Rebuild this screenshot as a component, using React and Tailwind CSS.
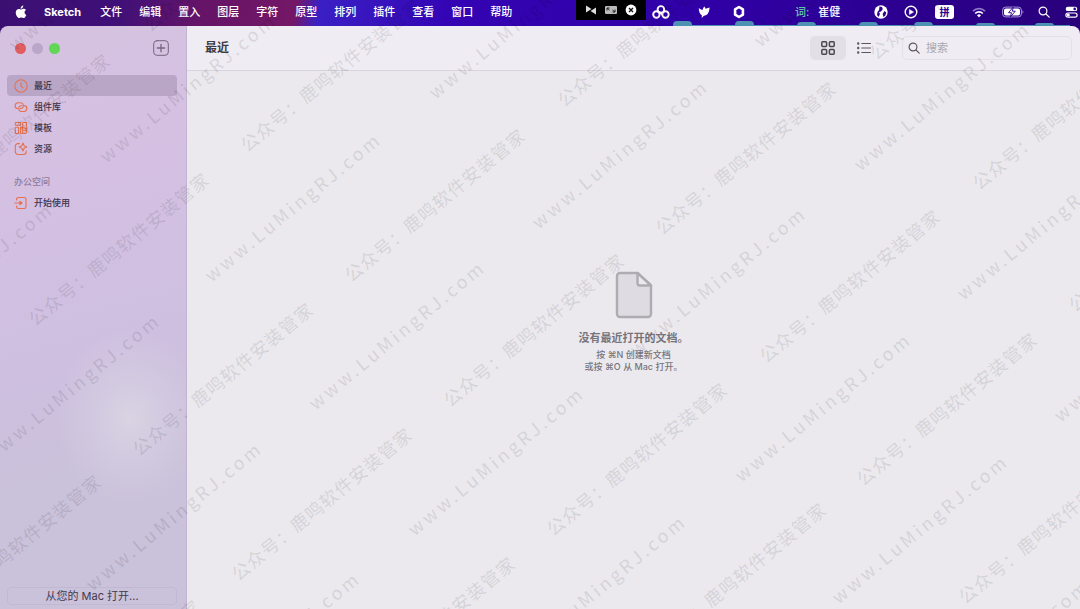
import React, { useState } from 'react';

const menus = ['文件', '编辑', '置入', '图层', '字符', '原型', '排列', '插件', '查看', '窗口', '帮助'];

// Centre of the first glyph of every watermark line
const urlMarks = [
  [17, 43], [108, 155], [213, 274], [317, 402], [416, 528], [518, 656],
  [-115, 344], [-8, 455], [94, 583], [192, 713],
  [437, 91], [540, 221], [638, 348], [743, 474], [840, 596], [921, 721],
  [762, 39], [862, 163], [965, 292], [1062, 414],
];

const nameMarks = [
  [-62, 196], [37, 315], [141, 445], [240, 570], [343, 699],
  [-71, 617], [28, 742],
  [152, 21], [249, 141], [353, 271], [452, 396], [555, 525], [654, 645],
  [566, 96], [664, 224], [768, 352], [865, 475], [967, 593],
  [878, 49], [981, 179], [1077, 301],
];

const AppleIcon = () => (
  <svg viewBox="0 0 24 28" className="h-[14px] w-3" fill="#fff">
    <path d="M16.500 1c.2 2-.6 3.500-1.500 4.600-1 1.100-2.300 1.900-3.700 1.800-.2-1.800.6-3.400 1.500-4.400C13.800 1.900 15.300 1.100 16.500 1zM22 9.800c-2 1.200-3 2.800-3 4.900 0 2.500 1.500 4.300 3.600 5.100-.9 2.700-3.100 6.400-5.500 6.400-1.700 0-2.300-1-4.400-1s-2.800 1-4.400 1C5.300 26.200 1.500 20.700 1.500 15.200 1.500 10.300 4.600 7.800 7.800 7.800c1.900 0 3.400 1.200 4.600 1.200 1.200 0 2.900-1.300 5.100-1.300 1.900 0 3.500.8 4.500 2.100z" />
  </svg>
);

const ClockIcon = () => (
  <svg viewBox="0 0 14 14" className="size-[14px]" fill="none" stroke="currentColor" strokeWidth="1.100" strokeLinecap="round">
    <circle cx="7" cy="7" r="6.200" />
    <path d="M7 3.500V7l1.800 1.800" />
  </svg>
);

const LinkIcon = () => (
  <svg viewBox="0 0 14 14" className="size-[14px]" fill="none" stroke="currentColor" strokeWidth="1.100" strokeLinecap="round">
    <path d="M3.400 8.600A3 3 0 0 1 3.800 2.700h2.700a3 3 0 0 1 2.400 4.700c-.6.900-1.700 1.200-2.600 1" />
    <path d="M10.600 5.600a3 3 0 0 1-.4 5.900H7.700a3 3 0 0 1-2.500-4.700c.6-.9 1.700-1.200 2.600-1" />
  </svg>
);

const TemplateIcon = () => (
  <svg viewBox="0 0 14 14" className="size-[14px]" fill="none" stroke="currentColor" strokeWidth="1.100" strokeLinejoin="round">
    <rect x="1.300" y="1.500" width="5.400" height="2.700" rx=".5" />
    <rect x="1.300" y="6.300" width="3.200" height="6.200" rx=".5" />
    <path d="M8.700 1.500h3.900v7.200L10.800 7H8.700z" />
    <path d="M6.500 6.300h2v6.200h-2z" />
    <path d="M8.500 9.300h4.100v1.200a2 2 0 0 1-2 2H8.500z" />
  </svg>
);

const AssetIcon = () => (
  <svg viewBox="0 0 14 14" className="size-[14px]" fill="none" stroke="currentColor" strokeWidth="1.100" strokeLinejoin="round" strokeLinecap="round">
    <path d="M5.500 1.600H4A2.700 2.700 0 0 0 1.300 4.300v5.500A2.700 2.700 0 0 0 4 12.500h5.500a2.700 2.700 0 0 0 2.700-2.700V9" />
    <path d="M9 1l1.100 2.700L12.800 5l-2.700 1.200L9 9 7.800 6.200 5.200 5l2.600-1.300z" />
  </svg>
);

const EnterIcon = () => (
  <svg viewBox="0 0 14 14" className="size-[14px]" fill="none" stroke="currentColor" strokeWidth="1.100" strokeLinejoin="round" strokeLinecap="round">
    <path d="M2.600 4V3.200a1.700 1.700 0 0 1 1.700-1.700h6a1.700 1.700 0 0 1 1.700 1.700v7.600a1.700 1.700 0 0 1-1.700 1.700h-6a1.700 1.700 0 0 1-1.700-1.700V10" />
    <path d="M.8 7h6.500" />
    <path d="M6 5.300 8 7 6 8.700z" fill="currentColor" />
  </svg>
);

const SearchIcon = ({ className }) => (
  <svg viewBox="0 0 12 12" className={className} fill="none" stroke="currentColor" strokeWidth="1.200" strokeLinecap="round">
    <circle cx="5" cy="5" r="3.900" />
    <path d="m8 8 3.200 3.200" />
  </svg>
);

const StatusIcons = () => (
  <>
    <svg viewBox="0 0 18 14" className="ml-[6px] h-[14px] w-[18px]" fill="none" stroke="#fff" strokeWidth="1.900">
      <circle cx="8.900" cy="4.400" r="3.300" />
      <circle cx="4.400" cy="9.500" r="3.200" />
      <circle cx="13.500" cy="9.500" r="3.200" />
      <path d="M6.500 7.300c2 0 3.200 1 4.200 2.500" />
    </svg>
    <svg viewBox="0 0 12 14" className="ml-7 h-[14px] w-3" fill="#fff">
      <path d="M.8 3C2 4.200 3.400 4.700 4.600 5 4.900 3.300 5.800 2.200 6.500 1.500L7.600 3.800 11.600 2.400C11.200 7.500 9.500 10.400 5.900 10.700L3.700 13l.2-2.700C1.800 9.200.8 6.500.8 3z" />
    </svg>
    <svg viewBox="0 0 12 14" className="ml-[23px] h-[14px] w-3" fill="none" stroke="#fff" strokeWidth="2.600" strokeLinejoin="round">
      <path d="M6 2 9.900 4.300v5.400L6 12 2.100 9.700V4.300z" />
    </svg>
    <p className="ml-[50px] w-[74px] text-[11px] whitespace-nowrap">
      <span className="mr-[6px] text-[#62c9a8]">词:</span> <span>崔健</span>
    </p>
    <svg viewBox="0 0 14 14" className="ml-[5px] size-[14px]">
      <circle cx="7" cy="7" r="6.700" fill="#fff" />
      <path d="M5.500 1.500 8 2l.8 2.200L7 6.500 5 7l1 2-1.500 3L3 10l.5-3L5 5zM10.500 6l1.800 1.500-1 3L9.500 12 8.600 9z" fill="#2d0090" />
    </svg>
    <svg viewBox="0 0 14 14" className="ml-4 size-[14px]" fill="none" stroke="#fff" strokeWidth="1.400">
      <circle cx="7" cy="7" r="5.800" />
      <path d="M5.400 4.500v5L9.600 7z" fill="#fff" strokeWidth=".5" />
    </svg>
    <span className="ml-[17px] flex h-[14px] w-[19px] items-center justify-center rounded-[3px] bg-white text-[10px] font-bold text-[#2d0090]">拼</span>
    <svg viewBox="0 0 16 12" className="ml-[17px] h-3 w-4" fill="none" strokeWidth="1.700">
      <path d="M2 5.200a8.500 8.500 0 0 1 12 0" stroke="#8f78c8" />
      <path d="M4.200 7.500a5.300 5.300 0 0 1 7.600 0" stroke="#fff" />
      <path d="m6 9.200 2 2.300 2-2.300a2.800 2.800 0 0 0-4 0z" fill="#fff" />
    </svg>
    <svg viewBox="0 0 22 12" className="ml-[15px] h-3 w-[22px]">
      <rect x=".6" y="1.100" width="18.800" height="9.800" rx="3" fill="none" stroke="#a796d8" />
      <rect x="2" y="2.500" width="16" height="7" rx="1.800" fill="#fff" />
      <path d="M20.500 4.200v3.600c1.200-.6 1.200-3 0-3.600z" fill="#a796d8" />
      <path d="M11.300 1 6.500 6.700h3L8.300 11l5-5.800h-3z" fill="#fff" stroke="#2d0090" strokeWidth=".9" />
    </svg>
    <SearchIcon className="ml-[14px] size-3" />
    <svg viewBox="0 0 13 12" className="ml-[15px] h-3 w-[13px]">
      <rect x=".7" y=".7" width="11.600" height="4.400" rx="2.200" fill="#fff" />
      <circle cx="9.700" cy="2.900" r="1.300" fill="#2d0090" />
      <rect x=".9" y="7" width="11.200" height="4.200" rx="2.100" fill="none" stroke="#fff" strokeWidth="1.200" />
      <circle cx="3.300" cy="9.100" r="1.500" fill="#fff" />
    </svg>
  </>
);

const MenuBar = () => (
  <header className="relative flex h-[26px] shrink-0 items-center pb-[2px] pl-[15px] pr-[2px] text-[11px] font-medium text-white">
    {/* Wallpaper showing above the window edge */}
    <div className="absolute right-[10px] bottom-0 flex items-end">
      <span className="h-[5px] w-[19px] rounded-t bg-[#4d91b3]" />
      <span className="h-px w-[43px] bg-[#4d91b3]" />
      <span className="h-[5px] w-[19px] rounded-t bg-[#4d91b3]" />
      <span className="h-px w-[43px] bg-[#4d91b3]" />
      <span className="h-1 w-[19px] rounded-t bg-[#4d91b3]" />
      <span className="h-px w-[43px] bg-[#4d91b3]" />
      <span className="h-1 w-[19px] rounded-t bg-[#4d91b3]" />
      <span className="h-px w-[36px] bg-[#4d91b3]" />
      <span className="h-1 w-[19px] rounded-t bg-[#4d91b3]" />
      <span className="h-px w-[43px] bg-[#4d91b3]" />
      <span className="h-[3px] w-[19px] rounded-t bg-[#4d91b3]" />
      <span className="h-px w-[40px] bg-[#4d91b3]" />
      <span className="h-[3px] w-[19px] rounded-t bg-[#4d91b3]" />
      <span className="h-px w-[16px] bg-[#4d91b3]" />
    </div>
    <AppleIcon />
    <nav className="relative ml-[17px] flex gap-[17px] whitespace-nowrap">
      <button className="mr-[2px] font-bold">Sketch</button>
      {menus.map((menu) => (
        <button key={menu}>{menu}</button>
      ))}
    </nav>
    <div className="relative ml-auto flex items-center">
      <div className="mb-1 flex h-5 w-[70px] items-center justify-center gap-2 self-start bg-black">
        <svg viewBox="0 0 12 12" className="size-3" fill="#ddd">
          <path d="M1 1.500v7L6.500 5zM11 3.500v7L5.500 7z" />
        </svg>
        <svg viewBox="0 0 12 12" className="size-3">
          <rect y="2" width="12" height="8" rx="1" fill="#bbb" />
          <path d="M2 6.500V4h2.500M2 4l2.500 2M10 5.500V8H7.500M10 8 7.500 6" stroke="#222" fill="none" />
        </svg>
        <svg viewBox="0 0 12 12" className="size-3">
          <circle cx="6" cy="6" r="5.400" fill="#fff" />
          <path d="m4 4 4 4M8 4 4 8" stroke="#111" strokeWidth="1.400" />
        </svg>
      </div>
      <StatusIcons />
    </div>
  </header>
);

const places = [
  { name: '最近', icon: ClockIcon },
  { name: '组件库', icon: LinkIcon },
  { name: '模板', icon: TemplateIcon },
  { name: '资源', icon: AssetIcon },
];

const SidebarItem = ({ name, icon: Icon, active, onClick }) => (
  <li>
    <button
      onClick={onClick}
      className={`flex h-[21px] w-full items-center gap-[6px] rounded pl-[7px] text-[9px] font-medium text-[#3f3348] ${active ? 'bg-[#b9a6c7]' : ''}`}
    >
      <span className="text-[#e5714f]"><Icon /></span>
      {name}
    </button>
  </li>
);

const Sidebar = ({ selected, onSelect }) => (
  <aside className="flex w-[187px] shrink-0 flex-col border-r border-[#c3b5d2] bg-[radial-gradient(ellipse_75px_90px_at_130px_392px,#d9d3e2_0%,#d6cfe2b0_40%,#d0c4e200_100%),linear-gradient(165deg,#d5c2e0_0%,#d5c0e2_25%,#cebfe0_55%,#cac1da_75%,#cac1da_100%)] pr-[9px] pb-1 pl-[7px]">
    <div className="flex h-[44px] items-center gap-[6px] px-2">
      <button aria-label="关闭" className="size-[11px] rounded-full bg-[#e05e60]" />
      <button aria-label="最小化" className="size-[11px] rounded-full bg-[#b9a6c9]" />
      <button aria-label="缩放" className="size-[11px] rounded-full bg-[#62d655]" />
      <button aria-label="新建" className="ml-auto text-[#76667f]">
        <svg viewBox="0 0 16 16" className="size-4" fill="none" stroke="currentColor" strokeLinecap="round">
          <rect x=".7" y=".7" width="14.600" height="14.600" rx="3.200" />
          <path d="M8 4.300v7.400M4.300 8h7.400" strokeWidth="1.300" />
        </svg>
      </button>
    </div>
    <ul className="mt-[5px]">
      {places.map((place) => (
        <SidebarItem key={place.name} {...place} active={selected === place.name} onClick={() => onSelect(place.name)} />
      ))}
    </ul>
    <h2 className="mt-[13px] pl-[7px] text-[9px] leading-5 font-medium text-[#8d7c9c]">办公空间</h2>
    <ul>
      <SidebarItem name="开始使用" icon={EnterIcon} active={selected === '开始使用'} onClick={() => onSelect('开始使用')} />
    </ul>
    <button className="mt-auto h-[18px] rounded border border-[#c3b8d2] text-[11px] leading-4 text-[#453b4e]">
      从您的 Mac 打开...
    </button>
  </aside>
);

const Toolbar = ({ title, view, onView }) => (
  <div className="flex h-[45px] shrink-0 items-center border-b border-[#d7d4db] bg-[#efecf3] pl-[18px] pr-2">
    <h1 className="text-[12px] font-bold text-[#3d3a40]">{title}</h1>
    <button
      aria-label="网格"
      onClick={() => onView('grid')}
      className={`ml-auto flex h-6 w-9 items-center justify-center rounded-[5px] ${view === 'grid' ? 'bg-[#e2dfe6]' : ''}`}
    >
      <svg viewBox="0 0 14 14" className="size-[14px]" fill="none" stroke="#4a474d" strokeWidth="1.500">
        <rect x=".8" y=".8" width="4.800" height="4.800" rx="1" />
        <rect x="8.400" y=".8" width="4.800" height="4.800" rx="1" />
        <rect x=".8" y="8.400" width="4.800" height="4.800" rx="1" />
        <rect x="8.400" y="8.400" width="4.800" height="4.800" rx="1" />
      </svg>
    </button>
    <button
      aria-label="列表"
      onClick={() => onView('list')}
      className={`flex h-6 w-9 items-center justify-center rounded-[5px] ${view === 'list' ? 'bg-[#e2dfe6]' : ''}`}
    >
      <svg viewBox="0 0 14 14" className="size-[14px]" stroke="#5a575d" strokeLinecap="round">
        <path d="M4.800 2.500h8.700M4.800 7h8.700M4.800 11.500h8.700" strokeWidth="1.100" />
        <path d="M1.200 2.500h.01M1.200 7h.01M1.200 11.500h.01" strokeWidth="2.400" />
      </svg>
    </button>
    <label className="ml-5 flex h-6 w-[170px] items-center gap-[6px] rounded-[5px] border border-[#e3e0e7] px-[5px] text-[#5c595f]">
      <SearchIcon className="size-3 shrink-0" />
      <input
        aria-label="搜索"
        placeholder="搜索"
        className="w-full min-w-0 bg-transparent text-[11px] outline-none placeholder:text-[#aaa7ae]"
      />
    </label>
  </div>
);

const EmptyState = () => (
  <div className="flex flex-1 flex-col items-center justify-center bg-[#ebe9ee] pb-[37px] text-center text-[#77757b]">
    <svg viewBox="0 0 38 48" className="h-12 w-[38px]" stroke="#aeacb2" strokeWidth="2.400" strokeLinejoin="round">
      <path d="M5 2h17.500L36 14.500V43a3 3 0 0 1-3 3H5a3 3 0 0 1-3-3V5a3 3 0 0 1 3-3z" fill="#dedce2" />
      <path d="M22.500 2v10a2.500 2.500 0 0 0 2.500 2.500h11z" fill="#ebe9ee" />
    </svg>
    <p className="mt-[9px] text-[11px] leading-5 font-bold">没有最近打开的文档。</p>
    <p className="mt-[1px] text-[9px] leading-3 font-medium">
      按 ⌘N 创建新文档
      <br />
      或按 ⌘O 从 Mac 打开。
    </p>
  </div>
);

const Watermark = () => (
  <div className="pointer-events-none absolute inset-0 overflow-hidden font-['Noto_Sans_CJK_SC',sans-serif] text-[18px] leading-6 font-medium whitespace-nowrap text-black/9 select-none" aria-hidden="true">
    {urlMarks.map(([x, y]) => (
      <span
        key={`${x},${y}`}
        className="absolute origin-[7px_14px] -rotate-[39.5deg] tracking-[3px]"
        style={{ left: x - 7, top: y - 14 }}
      >
        www.LuMingRJ.com
      </span>
    ))}
    {nameMarks.map(([x, y]) => (
      <span
        key={`${x},${y}`}
        className="absolute origin-[9px_12px] -rotate-[39.5deg] tracking-[1px]"
        style={{ left: x - 9, top: y - 12 }}
      >
        公众号：鹿鸣软件安装管家
      </span>
    ))}
  </div>
);

const App = () => {
  const [selected, setSelected] = useState('最近');
  const [view, setView] = useState('grid');

  return (
    <div className="relative flex min-h-screen flex-col overflow-hidden bg-[linear-gradient(100deg,#3a0f72_0%,#3f1078_10%,#651468_17%,#741766_25%,#3a20c4_27%,#3404b4_38%,#3000a6_60%,#29007c_90%,#25006c_100%)] font-[Inter,'Noto_Sans_CJK_SC',sans-serif]">
      <MenuBar />
      <div className="flex flex-1 overflow-hidden rounded-t-lg">
        <Sidebar selected={selected} onSelect={setSelected} />
        <main className="flex min-w-0 flex-1 flex-col">
          <Toolbar title={selected} view={view} onView={setView} />
          <EmptyState />
        </main>
      </div>
      <Watermark />
    </div>
  );
};

export default App;
